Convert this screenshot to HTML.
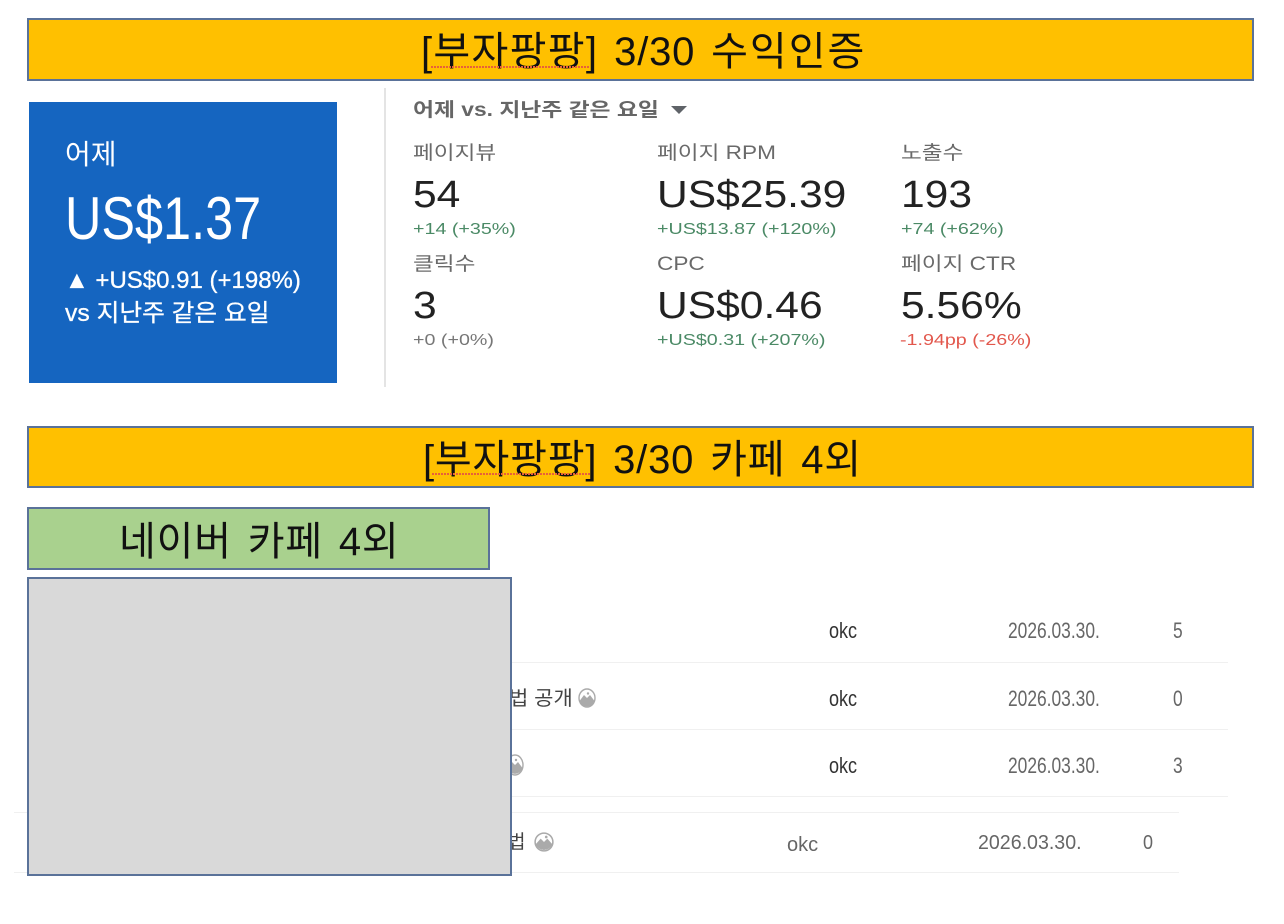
<!DOCTYPE html>
<html lang="ko"><head><meta charset="utf-8"><title>수익인증</title>
<style>
html,body{margin:0;padding:0;background:#fff;width:1284px;height:924px;overflow:hidden}
body{position:relative;font-family:"Liberation Sans","Noto Sans CJK KR",sans-serif}
.b{position:absolute;box-sizing:border-box;border:2px solid #5a7299}
.t{position:absolute;white-space:nowrap;line-height:1;transform-origin:0 0}
.h{font-size:40px;color:#111;letter-spacing:.8px;word-spacing:4px}
.lab{font-size:19px;color:#6a6a6a;transform:scaleX(1.19)}
.val{font-size:38px;color:#222;transform:scaleX(1.12)}
.g{font-size:16px;color:#4b8a66;transform:scaleX(1.23)}
.l{position:absolute;height:1px;background:#f0f0f0}
.c{font-size:22px;color:#444;transform:scaleX(.79)}
.o{transform:scaleX(.82)}
.w{position:absolute;height:2px;background:repeating-linear-gradient(90deg,#e8603a 0 2px,transparent 2px 3px)}
</style></head><body>
<div class="b" style="left:27px;top:18px;width:1227px;height:63px;background:#ffc000"></div>
<div class="t h" style="left:421px;top:32px"><span style="letter-spacing:1.3px">[부자팡팡]</span> 3/30 <span style="letter-spacing:2px">수익인증</span></div>
<div class="w" style="left:431px;top:66px;width:158px"></div>

<div style="position:absolute;left:29px;top:102px;width:308px;height:281px;background:#1565c0"></div>
<div class="t" style="left:65px;top:141px;font-size:28px;color:#fff">어제</div>
<div class="t" style="left:65px;top:189px;font-size:60px;color:#fff;transform:scaleX(.84)">US$1.37</div>
<div class="t" style="left:65px;top:269px;font-size:24px;color:#fff;font-weight:500;-webkit-text-stroke:.3px #fff">▲ +US$0.91 (+198%)</div>
<div class="t" style="left:65px;top:302px;font-size:24px;color:#fff;transform:scaleX(1.03);-webkit-text-stroke:.3px #fff">vs 지난주 같은 요일</div>
<div style="position:absolute;left:384px;top:88px;width:2px;height:299px;background:#e4e4e4"></div>

<div class="t" style="left:413px;top:101px;font-size:19px;font-weight:bold;color:#666;transform:scaleX(1.2)">어제 vs. 지난주 같은 요일</div>
<svg style="position:absolute;left:671px;top:106px" width="16" height="9"><path d="M0 0H16L8 8Z" fill="#5f6368"/></svg>

<div class="t lab" style="left:413px;top:144px">페이지뷰</div>
<div class="t val" style="left:413px;top:176px">54</div>
<div class="t g" style="left:413px;top:222px">+14 (+35%)</div>
<div class="t lab" style="left:657px;top:144px">페이지 RPM</div>
<div class="t val" style="left:657px;top:176px">US$25.39</div>
<div class="t g" style="left:657px;top:222px">+US$13.87 (+120%)</div>
<div class="t lab" style="left:901px;top:144px">노출수</div>
<div class="t val" style="left:901px;top:176px">193</div>
<div class="t g" style="left:901px;top:222px">+74 (+62%)</div>

<div class="t lab" style="left:413px;top:255px">클릭수</div>
<div class="t val" style="left:413px;top:287px">3</div>
<div class="t g" style="left:413px;top:333px;color:#777">+0 (+0%)</div>
<div class="t lab" style="left:657px;top:255px">CPC</div>
<div class="t val" style="left:657px;top:287px">US$0.46</div>
<div class="t g" style="left:657px;top:333px">+US$0.31 (+207%)</div>
<div class="t lab" style="left:901px;top:255px">페이지 CTR</div>
<div class="t val" style="left:901px;top:287px">5.56%</div>
<div class="t g" style="left:900px;top:333px;color:#e2574c">-1.94pp (-26%)</div>

<div class="b" style="left:27px;top:426px;width:1227px;height:62px;background:#ffc000"></div>
<div class="t h" style="left:423px;top:440px">[부자팡팡] 3/30 카페 4외</div>
<div class="w" style="left:432px;top:473px;width:158px"></div>

<div class="b" style="left:27px;top:507px;width:463px;height:63px;background:#a9d18e"></div>
<div class="t h" style="left:119px;top:522px">네이버 카페 4외</div>

<div class="l" style="left:500px;width:728px;top:662px"></div>
<div class="l" style="left:500px;width:728px;top:729px"></div>
<div class="l" style="left:500px;width:728px;top:796px"></div>
<div class="l" style="left:14px;width:1165px;top:812px"></div>
<div class="l" style="left:14px;width:1165px;top:872px"></div>

<div class="t c o" style="left:829px;top:620px;color:#333">okc</div>
<div class="t c" style="left:1008px;top:620px;color:#666">2026.03.30.</div>
<div class="t c" style="left:1173px;top:620px;color:#666">5</div>
<div class="t c o" style="left:829px;top:688px;color:#333">okc</div>
<div class="t c" style="left:1008px;top:688px;color:#666">2026.03.30.</div>
<div class="t c" style="left:1173px;top:688px;color:#666">0</div>
<div class="t c o" style="left:829px;top:755px;color:#333">okc</div>
<div class="t c" style="left:1008px;top:755px;color:#666">2026.03.30.</div>
<div class="t c" style="left:1173px;top:755px;color:#666">3</div>
<div class="t" style="left:787px;top:835px;font-size:20px;color:#666">okc</div>
<div class="t" style="left:978px;top:833px;font-size:20px;color:#666;transform:scaleX(.98)">2026.03.30.</div>
<div class="t" style="left:1143px;top:833px;font-size:20px;color:#666;transform:scaleX(.9)">0</div>

<div class="t" style="left:509px;top:689px;font-size:20px;color:#444;transform:scaleX(1.05)">법 공개</div>
<div class="t" style="left:508px;top:833px;font-size:19px;color:#444">법</div>

<svg style="position:absolute;left:578px;top:688px" width="18" height="20" viewBox="0 0 18 20"><ellipse cx="9" cy="10" rx="8" ry="9" fill="#fff" stroke="#aaa" stroke-width="1.4"/><path d="M1.500 13L6 7l3 3 3-3 4.500 6a8 8.500 0 0 1-15 0z" fill="#aaa"/><circle cx="10" cy="5.500" r="1.200" fill="#aaa"/></svg>
<svg style="position:absolute;left:534px;top:832px" width="20" height="20" viewBox="0 0 18 18"><circle cx="9" cy="9" r="8" fill="#fff" stroke="#aaa" stroke-width="1.4"/><path d="M1.500 11L6 6l3 3 3-3 4.500 5a8 8 0 0 1-15 0z" fill="#aaa"/><circle cx="11" cy="4.500" r="1.200" fill="#aaa"/></svg>
<svg style="position:absolute;left:506px;top:754px" width="18" height="22" viewBox="0 0 18 22"><ellipse cx="9" cy="11" rx="8" ry="10" fill="#fff" stroke="#aaa" stroke-width="1.4"/><path d="M1.500 14L6 8l3 3 3-3 4.500 6a8 9 0 0 1-15 0z" fill="#aaa"/><circle cx="10" cy="6" r="1.200" fill="#aaa"/></svg>

<div class="b" style="left:27px;top:577px;width:485px;height:299px;background:#d9d9d9"></div>
</body></html>
